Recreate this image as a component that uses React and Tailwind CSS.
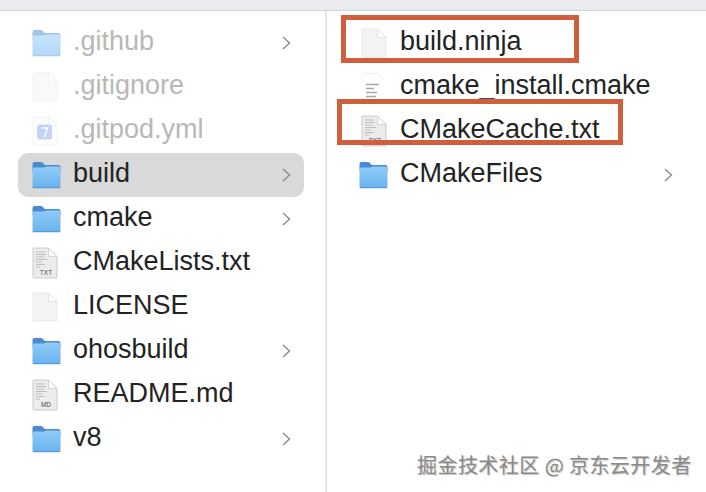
const leftItems = [
    { name: '.github', icon: 'folder', dim: true, arrow: true },
    { name: '.gitignore', icon: 'blank', dim: true },
    { name: '.gitpod.yml', icon: 'yml', dim: true },
    { name: 'build', icon: 'folder', arrow: true, selected: true },
    { name: 'cmake', icon: 'folder', arrow: true },
    { name: 'CMakeLists.txt', icon: 'txt', label: 'TXT' },
    { name: 'LICENSE', icon: 'blank' },
    { name: 'ohosbuild', icon: 'folder', arrow: true },
    { name: 'README.md', icon: 'txt', label: 'MD' },
    { name: 'v8', icon: 'folder', arrow: true },
];

const rightItems = [
    { name: 'build.ninja', icon: 'blank' },
    { name: 'cmake_install.cmake', icon: 'script' },
    { name: 'CMakeCache.txt', icon: 'txt', label: 'TXT' },
    { name: 'CMakeFiles', icon: 'folder', arrow: true },
];

const FolderIcon = () => (
    <svg width="29" height="28" viewBox="0 0 29 28" className="block">
        <defs>
            <linearGradient id="folderBody" x1="0" y1="0" x2="0" y2="1">
                <stop offset="0" stopColor="#8fcbf8" />
                <stop offset="1" stopColor="#69b2ee" />
            </linearGradient>
        </defs>
        <path d="M0.5 3 Q0.5 1 2.5 1 H9 Q10.5 1 11.5 2.5 L12.5 4 H26.5 Q28.5 4 28.5 6 V10 H0.5 Z" fill="#4a8bd0" />
        <path d="M0.5 8 Q0.5 6.5 2 6.5 H12 L14 5.5 H27 Q28.5 5.5 28.5 7 V25 Q28.5 27 26.5 27 H2.5 Q0.5 27 0.5 25 Z" fill="url(#folderBody)" />
        <rect x="0.5" y="26" width="28" height="1.2" rx="0.6" fill="#5a9ad6" />
    </svg>
);

const DocShape = ({ fill = '#f4f4f4' }) => (
    <>
        <path d="M1 1.5 Q1 1 1.5 1 H16.5 L25 9.5 V28.5 Q25 29 24.5 29 H1.5 Q1 29 1 28.5 Z" fill={fill} stroke="#e4e4e4" strokeWidth="0.8" />
        <path d="M16.5 1 V9.5 H25 Z" fill="#ffffff" stroke="#dedede" strokeWidth="0.8" strokeLinejoin="round" />
    </>
);

const BlankIcon = () => (
    <svg width="26" height="30" viewBox="0 0 26 30" className="block">
        <DocShape />
    </svg>
);

const YmlIcon = () => (
    <svg width="26" height="30" viewBox="0 0 26 30" className="block">
        <DocShape fill="#fdfdfd" />
        <rect x="5" y="8.5" width="15" height="15" rx="2.5" fill="#8fa8f0" />
        <path d="M10 12 H15.5 L12.5 21" fill="none" stroke="#ffffff" strokeWidth="1.4" />
    </svg>
);

const TxtIcon = ({ label }) => (
    <svg width="26" height="32" viewBox="0 0 26 32" className="block">
        <path d="M1 1.5 Q1 1 1.5 1 H16.5 L25 9.5 V30 Q25 31 24 31 H2 Q1 31 1 30 Z" fill="#ececec" stroke="#c2c2c2" strokeWidth="0.8" />
        <path d="M16.5 1 V9.5 H25 Z" fill="#ffffff" stroke="#cccccc" strokeWidth="0.8" strokeLinejoin="round" />
        <path d="M4 5 H13 M4 7.5 H14 M4 10 H12 M4 12.5 H15 M4 15 H10 M4 17.5 H13 M4 20 H8" stroke="#bdbdbd" strokeWidth="1" />
        <text x="14" y="28" textAnchor="middle" fontSize="6.5" fill="#4a4a4a" fontFamily="Liberation Sans, sans-serif">{label}</text>
    </svg>
);

const ScriptIcon = () => (
    <svg width="26" height="30" viewBox="0 0 26 30" className="block">
        <path d="M1 1 H16.5 L25 9.5 V29 H1 Z" fill="#ffffff" />
        <path d="M2 1.5 H16.5 L23 8" fill="none" stroke="#eeeeee" strokeWidth="1" />
        <path d="M5 12.5 H18 M5 16.5 H13 M5 20.5 H16 M5 24.5 H15" stroke="#a8a8a8" strokeWidth="1.3" />
    </svg>
);

const Chevron = () => (
    <svg width="9" height="14" viewBox="0 0 9 14" className="block">
        <path d="M1 1 L7.5 7 L1 13" fill="none" stroke="#8a8a8a" strokeWidth="1.4" />
    </svg>
);

const FileIcon = ({ item }) => {
    if (item.icon === 'folder') return <FolderIcon />;
    if (item.icon === 'yml') return <YmlIcon />;
    if (item.icon === 'txt') return <TxtIcon label={item.label} />;
    if (item.icon === 'script') return <ScriptIcon />;
    return <BlankIcon />;
};

const Row = ({ item, iconLeft, iconWidth, right, docShift }) => (
    <div
        className={`flex h-11 items-center rounded-[10px] ${item.selected ? 'bg-[#d9d9d9]' : ''} ${right}`}
    >
        <div className={`flex shrink-0 items-center ${iconLeft} ${iconWidth} ${item.dim ? 'opacity-50' : ''}`}>
            <div className={item.icon === 'folder' ? '' : docShift}>
                <FileIcon item={item} />
            </div>
        </div>
        <span className={`pb-[3px] text-[27px] leading-none whitespace-nowrap ${item.dim ? 'text-[#b8b8b8]' : 'text-[#232323]'}`}>
            {item.name}
        </span>
        {item.arrow && (
            <div className="ml-auto">
                <Chevron />
            </div>
        )}
    </div>
);

export default function App() {
    return (
        <div className="relative flex h-[492px] w-[706px] flex-col overflow-hidden bg-white font-['Liberation_Sans',sans-serif]">
            <div className="h-[11px] shrink-0 border-b border-[#d4d4d6] bg-[#e9ebef]" />
            <div className="flex min-h-0 flex-1">
                <div className="w-[327px] shrink-0 border-r-2 border-[#e6e6e6] pt-[10px] pr-[21px] pl-[18px]">
                    {leftItems.map((item) => (
                        <Row key={item.name} item={item} iconLeft="pl-[14px]" iconWidth="w-[55px]" right="pr-[13px]" docShift="" />
                    ))}
                </div>
                <div className="flex-1 pt-[10px] pr-[33px] pl-[32px]">
                    {rightItems.map((item) => (
                        <Row key={item.name} item={item} iconLeft="" iconWidth="w-[41px]" right="" docShift="ml-[2px]" />
                    ))}
                </div>
            </div>

            {/* red annotation boxes drawn over the list */}
            <div className="absolute top-[15px] left-[341px] h-[48px] w-[238px] border-[5px] border-[#cf5f3a]" />
            <div className="absolute top-[99px] left-[337px] h-[46px] w-[286px] border-[5px] border-[#cf5f3a]" />

            <div className="absolute top-[452px] left-[417px] font-['Noto_Sans_CJK_SC',sans-serif] text-[20px] leading-[26px] tracking-[0.45px] whitespace-nowrap text-[#8a8a8a] [text-shadow:1px_1px_1px_rgba(0,0,0,0.25)]">
                掘金技术社区 @ 京东云开发者
            </div>
        </div>
    );
}
